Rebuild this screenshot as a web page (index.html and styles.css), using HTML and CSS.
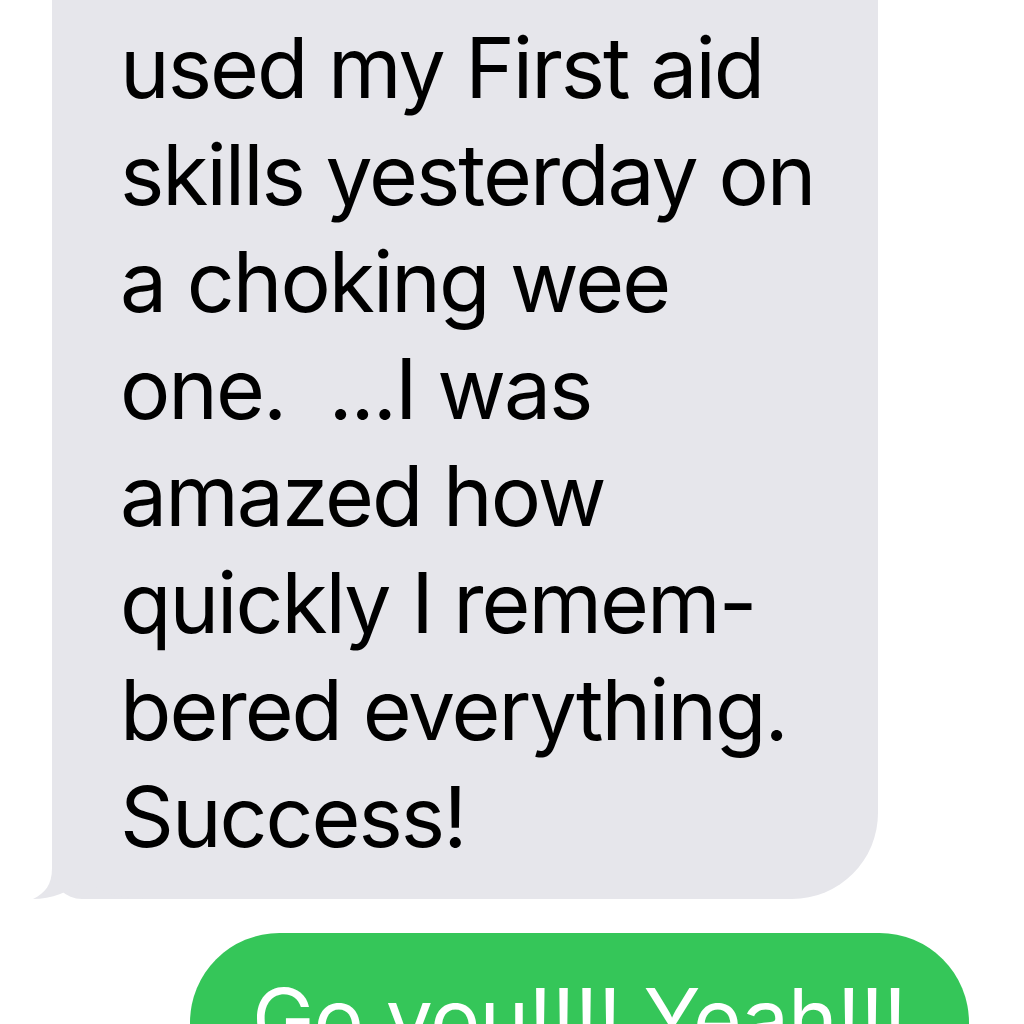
FILE: index.html
```html
<!DOCTYPE html>
<html lang="en">
<head>
    <meta charset="UTF-8">
    <meta name="viewport" content="width=device-width, initial-scale=1.0">
    <title>Messages</title>
    <link rel="stylesheet" href="styles.css">
</head>
<body>
    <div id="thread">
        <div class="bubble received">
            <p>used my First aid<br>skills yesterday on<br>a choking wee<br>one.&nbsp; ...I was<br>amazed how<br>quickly I remem-<br>bered everything.<br>Success!</p>
            <!-- tail of the bubble -->
            <svg class="tail" width="112" height="42" viewBox="0 0 112 42">
                <path d="M20 0 L20 10 C20 27 13 35 1 41 C19 41 38 34 53 22 C68 34 88 41 112 41 L112 0 Z" fill="#e6e6eb"/>
            </svg>
        </div>
        <div class="bubble sent">
            <p>Go you!!!! Yeah!!!</p>
        </div>
    </div>
</body>
</html>
```

FILE: styles.css
```css
/* General Styles */
* {
    margin: 0;
    padding: 0;
    box-sizing: border-box;
}

body {
    background-color: white;
    font-family: Inter, "Liberation Sans", Arial, sans-serif;
    height: 100vh;
    overflow: hidden;
}

#thread {
    display: flex;
    flex-direction: column;
}

.bubble {
    position: relative;
    font-size: 84px;
    line-height: 107px;
}

/* Gray incoming message */
.received {
    align-self: flex-start;
    width: 826px;
    margin-top: -40px;
    margin-left: 52px;
    padding: 54px 40px 29px 68px;
    background-color: #e6e6eb;
    color: black;
    letter-spacing: -2px;
    border-radius: 0 0 86px 30px;
}

.tail {
    position: absolute;
    left: -20px;
    bottom: -1px;
}

/* Green outgoing message */
.sent {
    align-self: flex-end;
    width: 779px;
    margin-top: 34px;
    margin-right: 55px;
    padding: 32px 40px 40px 62px;
    background-color: #35c659;
    color: white;
    letter-spacing: -1px;
    border-radius: 98px;
    white-space: nowrap;
}
```
